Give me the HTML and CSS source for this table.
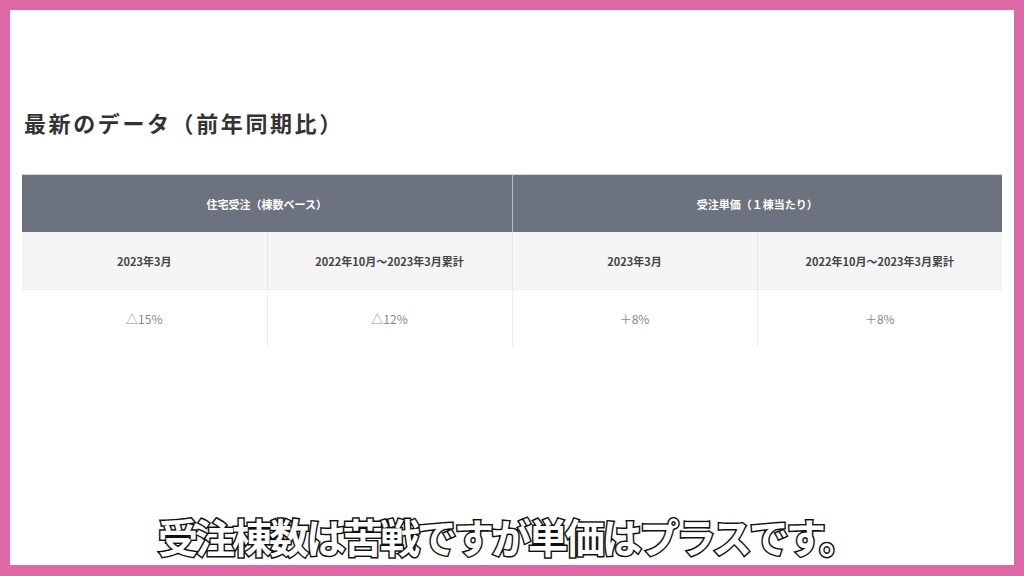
FILE: index.html
```html
<!DOCTYPE html>
<html lang="ja">
<head>
<meta charset="utf-8">
<link rel="stylesheet" href="styles.css">
</head>
<body>
<div class="frame">
  <div class="content">
    <h2 class="title">最新のデータ（前年同期比）</h2>
    <table class="data">
      <tr class="head">
        <th colspan="2">住宅受注（棟数ベース）</th>
        <th colspan="2">受注単価（１棟当たり）</th>
      </tr>
      <tr class="sub">
        <th>2023年3月</th>
        <th>2022年10月～2023年3月累計</th>
        <th>2023年3月</th>
        <th>2022年10月～2023年3月累計</th>
      </tr>
      <tr class="row">
        <td>△15%</td>
        <td>△12%</td>
        <td>＋8%</td>
        <td>＋8%</td>
      </tr>
    </table>
  </div>
  <p class="caption">受注棟数は苦戦ですが単価はプラスです。</p>
</div>
</body>
</html>
```

FILE: styles.css
```css
html, body {
  margin: 0;
  padding: 0;
}
body {
  font-family: "Noto Sans CJK JP", "Noto Sans", sans-serif;
  background: #fff;
}
.frame {
  width: 1024px;
  height: 576px;
  box-sizing: border-box;
  border: 10px solid #de67a6;
  border-bottom-width: 11px;
  background: #fff;
  display: flex;
  flex-direction: column;
}
.content {
  padding: 96px 0 0 12px;
}
.title {
  margin: 0 0 36px 2px;
  font-size: 22px;
  line-height: 32px;
  font-weight: 700;
  letter-spacing: 2.6px;
  color: #333;
}
.data {
  width: 980px;
  table-layout: fixed;
  border-collapse: collapse;
  border-top: 1px solid #d6d8db;
}
.data th, .data td {
  height: 57px;
  padding: 0;
  text-align: center;
  vertical-align: middle;
}
.head th {
  background: #6c737e;
  color: #fff;
  font-size: 11px;
  font-weight: 700;
  border-left: 1px solid #b9bdc3;
}
.head th:first-child {
  border-left: none;
}
.sub th {
  background: #f5f5f5;
  color: #444;
  font-size: 11px;
  font-weight: 700;
  border-left: 1px solid #e6e6e6;
  border-bottom: 1px solid #ececec;
}
.sub th:first-child, .row td:first-child {
  border-left: none;
}
.row td {
  color: #888;
  font-size: 12px;
  font-weight: 400;
  border-left: 1px solid #ececec;
}
.caption {
  margin: auto 0 5px 0;
  text-align: center;
  font-size: 40px;
  line-height: 48px;
  font-weight: 700;
  letter-spacing: -3px;
  color: #fff;
  -webkit-text-stroke: 3px #111;
  paint-order: stroke fill;
  padding-right: 10px;
}
```
